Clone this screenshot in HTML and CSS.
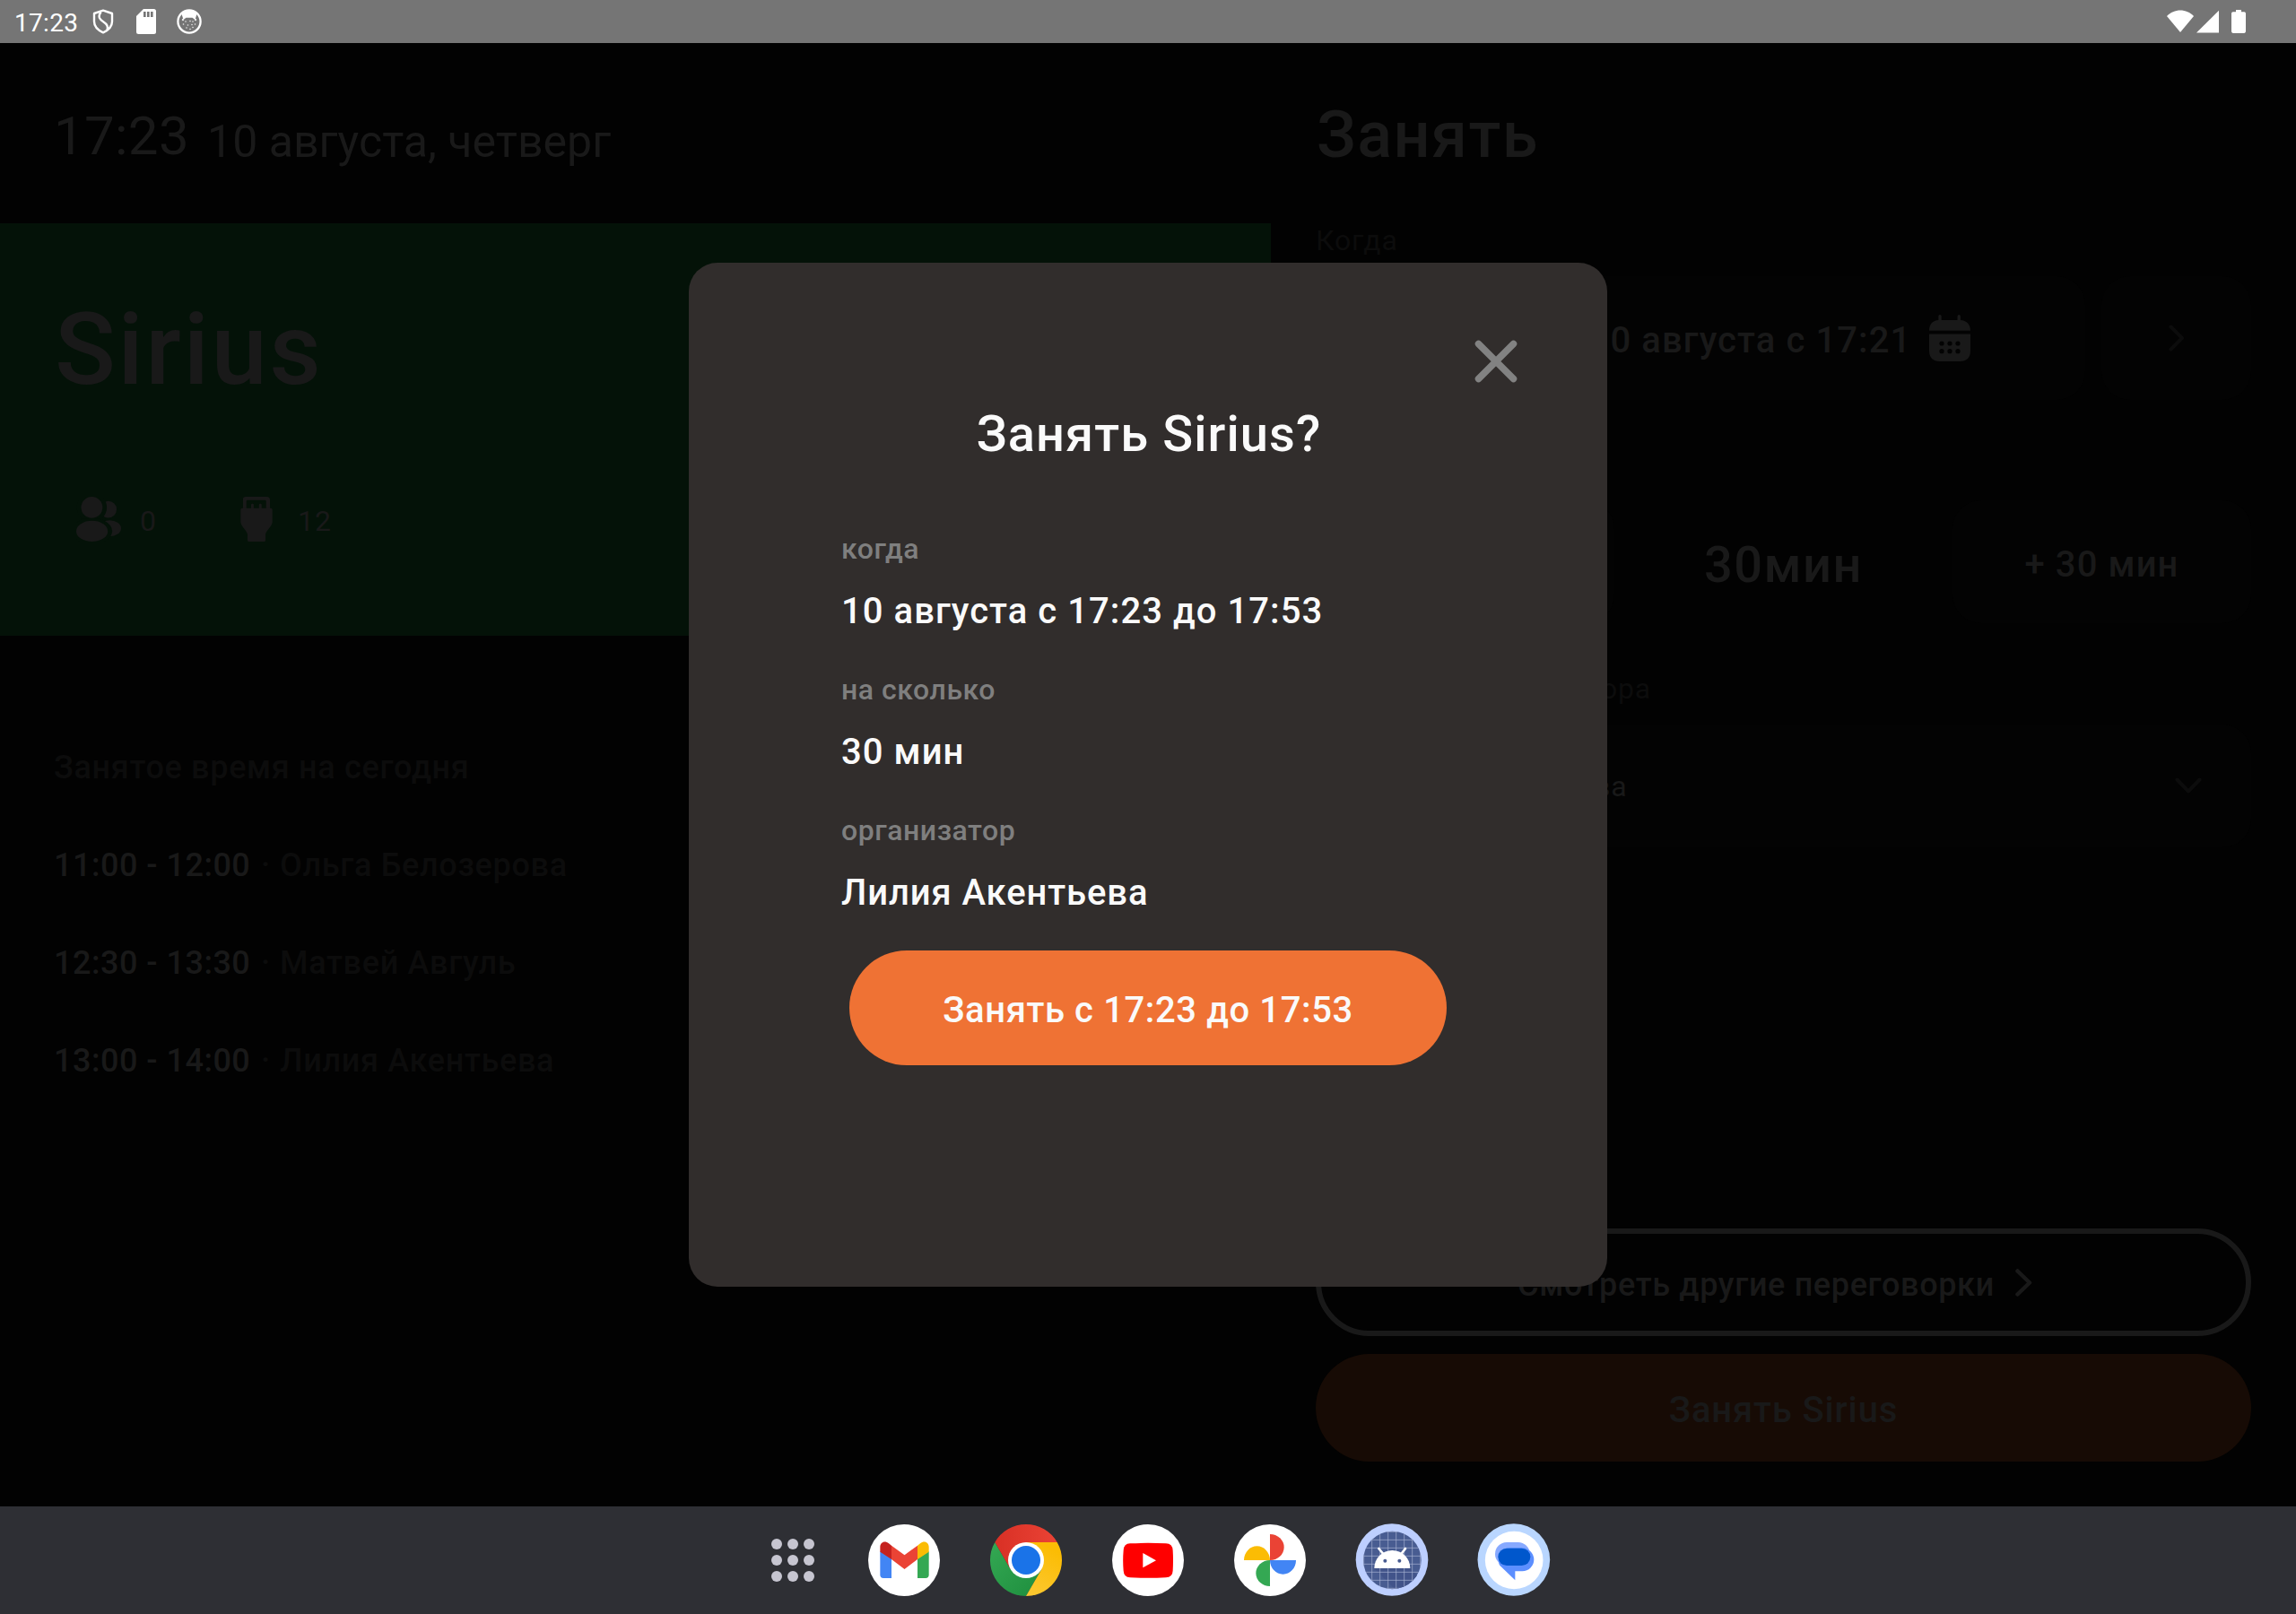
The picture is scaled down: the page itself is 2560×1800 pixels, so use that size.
FILE: index.html
```html
<!DOCTYPE html>
<html lang="ru">
<head>
<meta charset="utf-8">
<title>Sirius</title>
<link rel="stylesheet" href="styles.css">
</head>
<body>
<header class="status">
  <div class="status-left">
    <span class="status-time">17:23</span>
    <svg class="status-shield" viewBox="0 0 24 28" fill="none" stroke="#fff" stroke-width="2.4" stroke-linejoin="round"><path d="M12 1.6 22 5v9c0 6-4.500 9.800-10 12.400C6.500 23.800 2 20 2 14V5Z"/><path d="M9.500 3.500C5.500 9 8.500 12 12.500 14.500S18 19.500 16.500 23.500"/></svg>
    <svg class="status-sd" viewBox="0 0 22 28"><path fill="#fff" d="M8 0h11.500A2.500 2.500 0 0 1 22 2.500v23a2.500 2.500 0 0 1-2.500 2.500h-17A2.500 2.500 0 0 1 0 25.500V8Z"/><path fill="#757575" d="M8 3h2.600v6H8zm4 0h2.600v6H12zm4 0h2.600v6H16z"/></svg>
    <svg class="status-cat" viewBox="0 0 28 28"><circle cx="14" cy="14" r="12.600" fill="none" stroke="#fff" stroke-width="2.300"/><path fill="#fff" d="M5.500 5.500C10 .5 18 .5 22.500 5.500L20.500 12l-3-2.200h-7L7.500 12Z"/><g fill="#e8e8e8"><circle cx="7" cy="12" r="1.200"/><circle cx="21" cy="12" r="1.200"/><circle cx="10" cy="14" r=".8"/><circle cx="15" cy="13.500" r=".8"/><circle cx="18" cy="14" r=".8"/><circle cx="7.500" cy="17" r=".8"/><circle cx="12.500" cy="18" r=".8"/><circle cx="17" cy="17.500" r=".8"/><circle cx="20.500" cy="17" r=".8"/><circle cx="11" cy="21" r=".8"/><circle cx="15" cy="22.500" r=".8"/><circle cx="18" cy="20.500" r=".8"/></g></svg>
  </div>
  <svg class="status-right" viewBox="0 0 88 26"><g fill="#fff"><path d="M0 7C8-1.700 22-1.700 30 7L15 25Z"/><path d="M58 .8V25.500H33Z"/><path d="M77 0h6v2.300h3.200A1.800 1.800 0 0 1 88 4.100v20a1.800 1.800 0 0 1-1.800 1.800H73.800A1.800 1.800 0 0 1 72 24.100v-20a1.800 1.800 0 0 1 1.800-1.800H77Z"/></g></svg>
</header>

<main class="app">
  <section class="room">
    <div class="clock"><span class="clock-time">17:23</span><span class="clock-date">10 августа, четверг</span></div>
    <div class="room-card">
      <h1 class="room-name">Sirius</h1>
      <div class="features">
        <svg class="people" viewBox="0 0 50 50"><g fill="#191919"><circle cx="35.700" cy="14.100" r="9.400"/><ellipse cx="37.300" cy="35.200" rx="12.700" ry="9"/></g><g fill="#041208"><circle cx="17.400" cy="11.900" r="16.700"/><ellipse cx="17.500" cy="38.300" rx="22.600" ry="14.600"/></g><g fill="#191919"><circle cx="17.400" cy="11.900" r="11.900"/><ellipse cx="17.600" cy="38.400" rx="17.600" ry="11.600"/></g></svg>
        <span class="feature-value people-value">0</span>
        <svg class="plug" viewBox="0 0 36 50"><g fill="#191919"><path fill-rule="evenodd" d="M5.500 0h24A3.500 3.500 0 0 1 33 3.500V14H3V3.500A3 3 0 0 1 5.500 0ZM6.700 5v8h22V5a1.200 1.200 0 0 0-1.200-1.200H7.900A1.200 1.200 0 0 0 6.700 5Z"/><rect x="12" y="7.700" width="2.900" height="7" rx="1.400"/><rect x="20.800" y="7.700" width="2.900" height="7" rx="1.400"/><path d="M2 12.700h32a1.700 1.700 0 0 1 1.700 1.700V28c0 5-7.500 10-7.700 14.500v6A1.500 1.500 0 0 1 26.500 50h-17A1.500 1.500 0 0 1 8 48.500v-6C7.800 38 .3 33 .3 28V14.400A1.700 1.700 0 0 1 2 12.700Z"/></g></svg>
        <span class="feature-value">12</span>
      </div>
    </div>
    <div class="schedule">
      <h2 class="schedule-title">Занятое время на сегодня</h2>
      <ul class="slots">
        <li class="slot"><span class="slot-time">11:00 - 12:00</span><span>·</span><span>Ольга Белозерова</span></li>
        <li class="slot"><span class="slot-time">12:30 - 13:30</span><span>·</span><span>Матвей Авгуль</span></li>
        <li class="slot"><span class="slot-time">13:00 - 14:00</span><span>·</span><span>Лилия Акентьева</span></li>
      </ul>
    </div>
  </section>

  <section class="booking">
    <h2 class="booking-title">Занять</h2>
    <div class="label label-when">Когда</div>
    <div class="date-row">
      <div class="card"></div>
      <div class="card date-card"><span>10 августа с 17:21</span>
        <svg class="calendar" viewBox="0 0 46 52"><g fill="#191919"><path d="M12 0a1.700 1.700 0 0 1 1.700 1.700V6H31.500V1.700a1.700 1.700 0 0 1 3.400 0V6C41.500 6.500 46 10.500 46 17.700H0C0 10.500 4 6.500 10.300 6V1.700A1.700 1.700 0 0 1 12 0Z"/><path d="M0 21.500h46V40c0 8-4 12-12 12H12C4 52 0 48 0 40Z"/></g><g fill="#030303"><circle cx="14" cy="32" r="2.600"/><circle cx="23" cy="32" r="2.600"/><circle cx="32" cy="32" r="2.600"/><circle cx="14" cy="40.700" r="2.600"/><circle cx="23" cy="40.700" r="2.600"/><circle cx="32" cy="40.700" r="2.600"/></g></svg>
      </div>
      <div class="card next"><svg class="chevron-next" viewBox="0 0 18 30" fill="none" stroke="#0c0c0c" stroke-width="4" stroke-linecap="round" stroke-linejoin="round"><path d="M2.500 2.500 15 15 2.500 27.500"/></svg></div>
    </div>
    <div class="length-row">
      <div class="card"></div>
      <div class="length">30мин</div>
      <div class="card more">+ 30 мин</div>
    </div>
    <div class="label label-host">Выбор организатора</div>
    <div class="card host"><span>Лилия Акентьева</span><svg class="chevron-down" viewBox="0 0 30 19" fill="none" stroke="#0c0c0c" stroke-width="4" stroke-linecap="round" stroke-linejoin="round"><path d="M2.500 2.500 15 15.500 27.500 2.500"/></svg></div>
    <div class="actions">
      <div class="pill outline"><span>Смотреть другие переговорки</span><svg class="chevron-rooms" viewBox="0 0 19 31" fill="none" stroke="#191919" stroke-width="4.500" stroke-linecap="round" stroke-linejoin="round"><path d="M2.500 2.500 16 15.500 2.500 28.500"/></svg></div>
      <div class="pill solid">Занять Sirius</div>
    </div>
  </section>
</main>

<div class="dialog">
  <svg class="close" viewBox="0 0 48 48" stroke="#828282" stroke-width="7.500" stroke-linecap="round"><path d="M4.500 4.500 43.500 43.500M43.500 4.500 4.500 43.500"/></svg>
  <h2 class="dialog-title">Занять Sirius?</h2>
  <dl class="details">
    <div class="detail"><dt>когда</dt><dd>10 августа с 17:23 до 17:53</dd></div>
    <div class="detail"><dt>на сколько</dt><dd>30 мин</dd></div>
    <div class="detail"><dt>организатор</dt><dd>Лилия Акентьева</dd></div>
  </dl>
  <button class="confirm">Занять с 17:23 до 17:53</button>
</div>

<nav class="taskbar">
  <svg class="all-apps" viewBox="0 0 48 48" fill="#c6c5d0"><circle cx="6" cy="6" r="6"/><circle cx="24" cy="6" r="6"/><circle cx="42" cy="6" r="6"/><circle cx="6" cy="24" r="6"/><circle cx="24" cy="24" r="6"/><circle cx="42" cy="24" r="6"/><circle cx="6" cy="42" r="6"/><circle cx="24" cy="42" r="6"/><circle cx="42" cy="42" r="6"/></svg>
  <svg class="app-icon" viewBox="384 90 240 240"><circle cx="504" cy="210" r="120" fill="#fff"/><path fill="#4285f4" d="M424 180 462 205V270H435a11 11 0 0 1-11-11Z"/><path fill="#34a853" d="M587 180 549 205V270H576a11 11 0 0 0 11-11Z"/><path fill="#ea4335" d="M462 161 505.500 193 549 161V207L505.500 240 462 207Z"/><path fill="#c5221f" d="M424 182V166C424 150 440 143 453 154L462 161V207Z"/><path fill="#fbbc04" d="M587 182V166C587 150 571 143 558 154L549 161V207Z"/></svg>
  <svg class="app-icon" viewBox="792 90 240 240"><defs><linearGradient id="cr"><stop offset="0" stop-color="#d93025"/><stop offset="1" stop-color="#ea4335"/></linearGradient><linearGradient id="cg" x1="1" y1="1" x2="0" y2="0"><stop offset="0" stop-color="#1e8e3e"/><stop offset="1" stop-color="#34a853"/></linearGradient><linearGradient id="cy" x1="0" y1="1" x2=".4" y2="0"><stop offset="0" stop-color="#fcc934"/><stop offset="1" stop-color="#fbbc04"/></linearGradient></defs><path fill="url(#cg)" d="M912 330A120 120 0 0 1 808 150L860 240H964Z"/><path fill="url(#cy)" d="M1016 150A120 120 0 0 1 912 330L964 240 912 150Z"/><path fill="url(#cr)" d="M808 150A120 120 0 0 1 1016 150H912L860 240Z"/><circle cx="912" cy="210" r="60" fill="#fff"/><circle cx="912" cy="210" r="48" fill="#1a73e8"/></svg>
  <svg class="app-icon" viewBox="1200 90 240 240"><circle cx="1320" cy="210" r="120" fill="#fff"/><path fill="#f00" d="M1260 154Q1320 151 1380 154 1402 155 1403 177 1405 210 1403 245 1402 267 1380 268 1320 271 1260 268 1239 267 1238 245 1235 210 1238 177 1239 155 1260 154Z"/><path fill="#fff" d="M1303 186 1347 210.500 1303 235Z"/></svg>
  <svg class="app-icon" viewBox="228 90 240 240"><circle cx="348" cy="210" r="120" fill="#fff"/><path fill="#ea4335" d="M348 123A47 43.500 0 0 1 348 210Z"/><path fill="#fbbc04" d="M261 210A43.500 47 0 0 1 348 210Z"/><path fill="#34a853" d="M348 297A47 43.500 0 0 1 348 210Z"/><path fill="#4285f4" d="M435 210A43.500 47 0 0 1 348 210Z"/></svg>
  <svg class="app-icon" viewBox="635 90 240 240"><defs><clipPath id="ac"><circle cx="756" cy="210" r="97"/></clipPath></defs><circle cx="755" cy="208.500" r="121" fill="#bdcfff"/><circle cx="756" cy="210" r="97" fill="#485c91"/><g clip-path="url(#ac)"><path d="M695 237H816L860 281V320H778Z" fill="#42548a"/><path d="M661 110V310M688 110V310M715 110V310M742 110V310M769 110V310M796 110V310M823 110V310M850 110V310M655 115H860M655 142H860M655 169H860M655 196H860M655 223H860M655 250H860M655 277H860M655 304H860" stroke="#a9b4d4" stroke-width="2"/></g><path fill="#fff" d="M696 237A60 60 0 0 1 816 237Z"/><path d="M711 171 726 189M800 171 786 189" stroke="#fff" stroke-width="8" stroke-linecap="round"/><circle cx="732" cy="212" r="6" fill="#485c91"/><circle cx="780" cy="212" r="6" fill="#485c91"/></svg>
  <svg class="app-icon" viewBox="1043 90 240 240"><circle cx="1162.500" cy="208.500" r="121" fill="#b9d6ff"/><circle cx="1163.500" cy="210" r="97" fill="#fff"/><rect x="1100" y="150" width="116" height="78" rx="39" fill="#87a9ff"/><path fill="#5c8fff" d="M1149 169H1191A39 39 0 0 1 1191 247H1167V277L1117 229C1105 215 1112 169 1149 169Z"/><rect x="1110" y="170" width="108" height="58" rx="29" fill="#0057cc"/></svg>
</nav>
</body>
</html>
```
FILE: styles.css
```css
* { box-sizing: border-box; margin: 0; padding: 0; }

body {
  width: 2560px;
  height: 1800px;
  display: flex;
  flex-direction: column;
  overflow: hidden;
  background: #020202;
  color: #191919;
  font-family: Roboto, "Noto Sans", sans-serif;
  font-weight: 500;
}

svg { display: block; flex: none; }
h1, h2 { font-weight: 500; }

/* Status bar */
.status {
  height: 48px;
  flex: none;
  display: flex;
  justify-content: space-between;
  align-items: center;
  padding: 0 56px 0 16px;
  background: #757575;
  color: #fff;
}
.status-left { display: flex; align-items: center; }
.status-time { width: 87px; font-size: 28px; font-weight: 400; line-height: 32px; letter-spacing: .3px; padding-top: 3px; }
.status-shield { width: 24px; height: 28px; }
.status-sd { width: 22px; height: 28px; margin-left: 25px; }
.status-cat { width: 28px; height: 28px; margin-left: 23px; }
.status-right { width: 88px; height: 26px; }

/* Room screen */
.app { flex: 1; display: grid; grid-template-columns: 1417px 1fr; }
.room { display: flex; flex-direction: column; }
.clock { height: 201px; display: flex; align-items: flex-start; padding: 69px 0 0 60px; font-weight: 400; }
.clock-time { width: 171px; font-size: 60px; line-height: 70px; letter-spacing: .3px; }
.clock-date { margin-top: 12px; font-size: 50px; line-height: 58px; letter-spacing: .03px; }

.room-card { height: 460px; padding: 75px 0 0 61px; background: #041208; }
.room-name { font-size: 112px; line-height: 132px; letter-spacing: 2.5px; }
.features { display: flex; margin: 98px 0 0 24px; height: 50px; align-items: center; }
.people { width: 50px; height: 50px; }
.plug { width: 36px; height: 50px; margin-right: 28px; }
.feature-value { font-size: 32px; font-weight: 400; line-height: 40px; padding-top: 3px; letter-spacing: 1px; }
.people-value { width: 112px; padding-left: 21px; margin-right: 21px; }

.schedule { padding: 125px 0 0 60px; color: #0c0c0c; font-size: 36px; line-height: 44px; letter-spacing: .68px; }
.schedule-title { font-size: inherit; }
.slots { list-style: none; display: flex; flex-direction: column; gap: 65px; margin-top: 65px; }
.slot { display: grid; grid-template-columns: 231px 21px 1fr; }
.slot-time { color: #191919; letter-spacing: .5px; }

/* Booking form */
.booking { display: flex; flex-direction: column; padding: 61px 50px 50px; font-size: 40px; line-height: 48px; letter-spacing: 1.1px; }
.booking-title { font-size: 72px; line-height: 84px; letter-spacing: 1.5px; padding-left: 1px; }
.label { font-size: 32px; font-weight: 400; line-height: 38px; letter-spacing: .8px; color: #0c0c0c; }
.label-when { margin-top: 56px; }
.label-host { width: 374px; margin-top: 54px; text-align: right; }
.card { border-radius: 32px; background: #030303; display: flex; align-items: center; justify-content: center; }
.date-row { display: grid; grid-template-columns: 167px 673px 167px; gap: 18px; height: 138px; margin-top: 21px; }
.date-card { gap: 20px; padding-right: 8px; }
.date-card span { padding-top: 5px; }
.calendar { width: 46px; height: 52px; }
.chevron-next { width: 18px; height: 30px; }
.length-row { display: grid; grid-template-columns: 333px 1fr 333px; height: 137px; margin-top: 112px; }
.length { align-self: center; text-align: center; font-size: 56px; line-height: 66px; letter-spacing: 1.5px; padding-top: 7px; }
.more { padding-top: 7px; }
.host { height: 137px; margin-top: 21px; padding: 0 55px 0 73px; justify-content: space-between; font-size: 32px; font-weight: 400; letter-spacing: .8px; }
.chevron-down { width: 30px; height: 19px; }
.actions { margin-top: auto; display: flex; flex-direction: column; gap: 20px; }
.pill { height: 120px; border-radius: 60px; display: flex; align-items: center; justify-content: center; padding-top: 5px; }
.outline { border: 6px solid #191919; font-size: 36px; letter-spacing: .65px; gap: 23px; padding-right: 19px; }
.outline svg { margin-bottom: 5px; }
.chevron-rooms { width: 19px; height: 31px; }
.solid { background: #170b05; letter-spacing: .85px; }

/* Confirmation dialog, floats over the room screen */
.dialog {
  position: absolute;
  left: 768px;
  top: 293px;
  width: 1024px;
  height: 1142px;
  padding: 158px 170px 0;
  border-radius: 32px;
  background: #312d2c;
  color: #fafafa;
}
.close { position: absolute; right: 100px; top: 86px; width: 48px; height: 48px; }
.dialog-title { text-align: center; font-size: 56px; line-height: 66px; letter-spacing: 1.1px; padding-left: 2px; }
.details { display: flex; flex-direction: column; gap: 44px; margin-top: 76px; }
.detail { height: 113px; display: flex; flex-direction: column; justify-content: space-between; }
.detail dt { font-size: 32px; line-height: 38px; letter-spacing: .55px; color: #7f7f7f; }
.detail dd { font-size: 40px; line-height: 48px; letter-spacing: 1.05px; }
.detail:last-child dd { letter-spacing: .9px; }
.confirm {
  display: block;
  width: 666px;
  height: 128px;
  margin: 40px auto 0;
  padding-top: 5px;
  border: 0;
  border-radius: 64px;
  background: #ef7234;
  color: #fafafa;
  font: 500 40px/48px Roboto, "Noto Sans", sans-serif;
  letter-spacing: .6px;
}

/* Taskbar */
.taskbar { height: 120px; flex: none; display: flex; align-items: center; gap: 56px; padding-left: 860px; background: #2e2f34; }
.all-apps { width: 48px; height: 48px; margin-right: 4px; }
.app-icon { width: 80px; height: 80px; overflow: visible; }
```
